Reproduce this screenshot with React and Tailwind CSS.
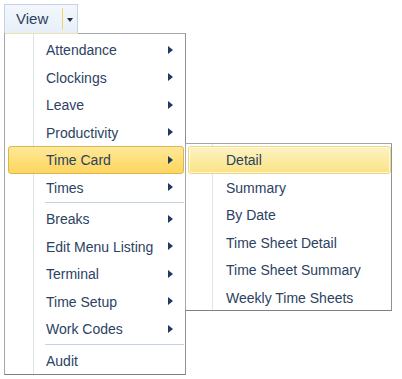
import React from "react";

const mainItems = [
  { label: "Attendance", sub: true },
  { label: "Clockings", sub: true },
  { label: "Leave", sub: true },
  { label: "Productivity", sub: true },
  { label: "Time Card", sub: true, active: true },
  { label: "Times", sub: true },
  { sep: true },
  { label: "Breaks", sub: true },
  { label: "Edit Menu Listing", sub: true },
  { label: "Terminal", sub: true },
  { label: "Time Setup", sub: true },
  { label: "Work Codes", sub: true },
  { sep: true },
  { label: "Audit" },
];

const subItems = [
  "Detail",
  "Summary",
  "By Date",
  "Time Sheet Detail",
  "Time Sheet Summary",
  "Weekly Time Sheets",
];

const Arrow = () => (
  <span className="w-0 h-0 border-l-[5px] border-l-[#1e3a5f] border-y-[4px] border-y-transparent" />
);

const MenuItem = ({ item }) => {
  if (item.sep) {
    return (
      <div className="h-[4px] pl-[40px] pr-[1px] pt-[1px]">
        <div className="h-[2px] bg-[#c5d3e3] border-b border-white" />
      </div>
    );
  }
  return (
    <div
      className={`h-[27.5px] ml-[3px] mr-[1px] pl-[37px] pr-[10px] flex items-center justify-between rounded-[3px] border ${
        item.active
          ? "border-[#dcb54e] bg-gradient-to-b from-[#fee99a] via-[#fedf79] to-[#fdd560]"
          : "border-transparent"
      }`}
    >
      <span className="pt-[2px]">{item.label}</span>
      {item.sub && <Arrow />}
    </div>
  );
};

export default function App() {
  return (
    <div
      className="w-[402px] h-[379px] bg-white text-[14px] text-[#2c4262] p-[4px] overflow-hidden"
      style={{ fontFamily: '"Liberation Sans", Arial, sans-serif' }}
    >
      {/* View split button */}
      <div className="w-[74px] h-[29px] flex items-stretch border border-b-0 border-[#c4d4e8] bg-gradient-to-b from-[#f3f7fc] to-[#e8eff8]">
        <div className="flex-1 flex items-center pl-[11px] pt-[1px] text-[15px]">View</div>
        <div className="w-px my-[3px] bg-[#f0d66a]" />
        <div className="w-[14px] flex items-center justify-center">
          <span className="w-0 h-0 mt-[2px] border-t-[4px] border-t-[#1e2f45] border-x-[3px] border-x-transparent" />
        </div>
      </div>

      <div className="relative">
        {/* main menu */}
        <div className="relative w-[182px] h-[342px] bg-white border border-[#a3a6aa] border-b-[#7d8086] border-r-[#8e9196] pt-[2px]">
          <div className="absolute left-[28px] top-0 bottom-0 w-[2px] border-l border-[#e2e3e3] bg-white" />
          <div className="absolute left-0 top-[-1px] w-[73px] h-px bg-[#eee2b0]" />
          <div className="relative">
            {mainItems.map((it, i) => (
              <MenuItem key={i} item={it} />
            ))}
          </div>
        </div>

        {/* Time Card submenu */}
        <div className="absolute left-[181px] top-[110px] w-[207px] h-[168px] bg-white border border-[#a3a6aa] border-b-[#7d8086] border-r-[#8e9196] pt-[2px]">
          <div className="absolute left-[26px] top-0 bottom-0 w-[2px] border-l border-[#e2e3e3] bg-white" />
          <div className="relative">
            {subItems.map((s, i) => (
              <div
                key={s}
                className={`h-[27.5px] ml-[2px] pl-[37px] flex items-center rounded-[3px] border ${
                  i === 0
                    ? "border-[#f1d77c] bg-gradient-to-b from-[#fdf3c4] via-[#fceba2] to-[#fbe287] shadow-[inset_0_0_0_1px_rgba(255,255,255,0.7)]"
                    : "border-transparent"
                }`}
              >
                <span className="pt-[2px]">{s}</span>
              </div>
            ))}
          </div>
        </div>
      </div>
    </div>
  );
}
